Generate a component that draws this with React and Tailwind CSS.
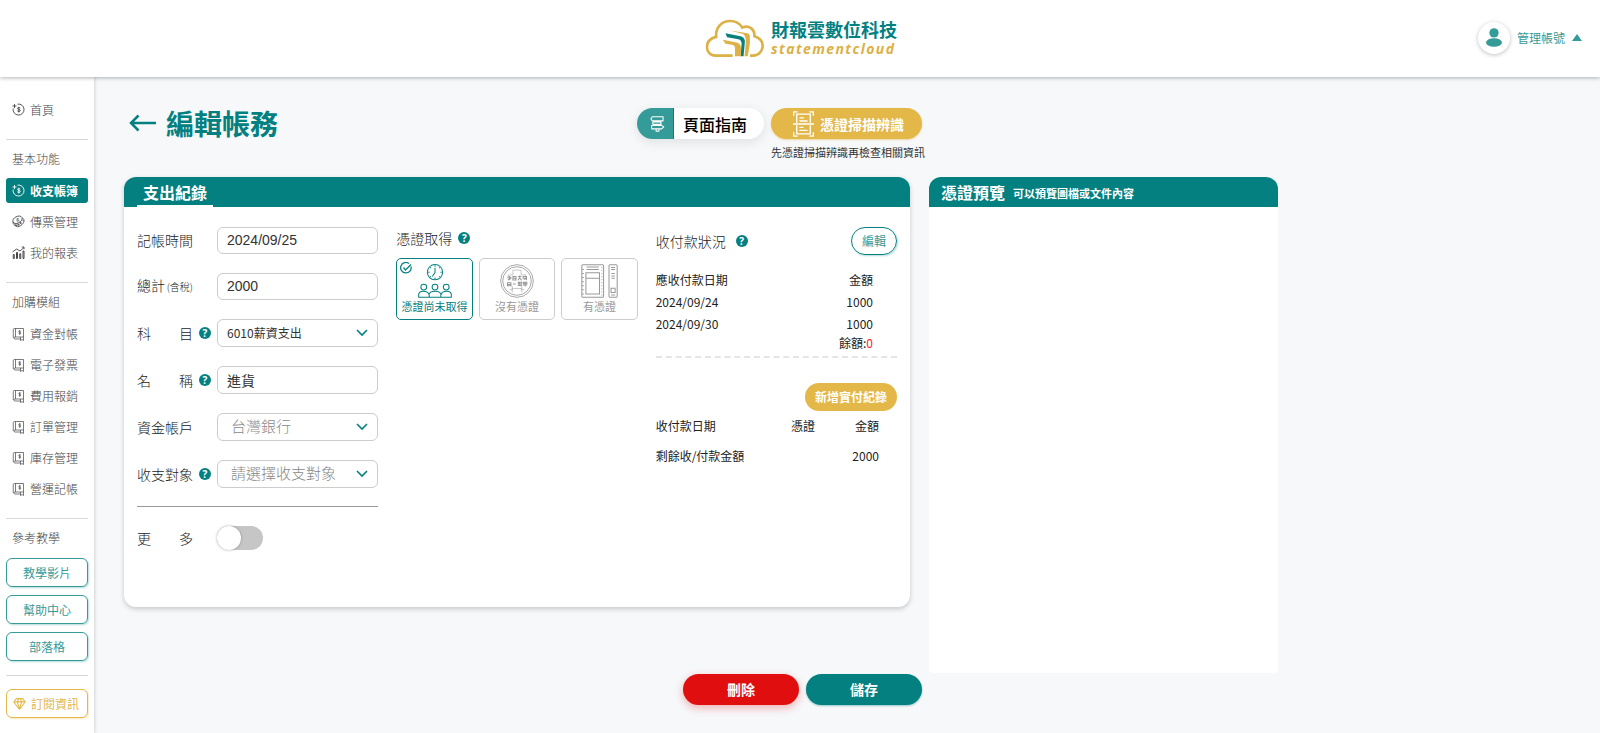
import React, { useState } from 'react';
import clsx from 'clsx';
import { Gem } from 'lucide-react';

const CoinIcon = () => (
    <svg viewBox="0 0 26 26" className="size-[13px] shrink-0" fill="none" stroke="currentColor" strokeWidth="1.800">
        <path d="M11 2.300A11 11 0 1 1 2.300 11" />
        <path d="M1 6h8M5 2v8" />
        <path d="M16.500 10.300c-.7-1.300-5.500-1.800-5.500.8s5.600 1.400 5.600 4-5 2.200-6 .4M13.700 7.500v11.500" strokeWidth="1.800" />
    </svg>
);

const VoucherIcon = () => (
    <svg viewBox="0 0 26 26" className="size-[13px] shrink-0" fill="none" stroke="currentColor" strokeWidth="1.600">
        <ellipse cx="11" cy="9.500" rx="10" ry="6.500" transform="rotate(-28 11 9.500)" />
        <path d="M2 14c0 3 1 5 3 6 5 2 10-1 14-5M5 20c2 3 5 4 9 3 6-2 10-7 10-12 0-2-1-4-3-5" />
        <path d="M6 16.500l4 6M11 16l3 6M16 13l3 6M20 9l4 4" strokeWidth="1.400" />
        <path d="M13.500 7.500c-1.200-1-4.500-.4-4 1.200s4 .6 4.100 2.200-3.400 1.600-4.400.6" />
    </svg>
);

const ChartIcon = () => (
    <svg viewBox="0 0 26 26" className="size-[13px] shrink-0" fill="none" stroke="currentColor" strokeWidth="2">
        <path d="M2.500 25v-8h2v8zM9 25V13h2v12zM15.500 25V15.500h2V25zM22 25V10h2v15z" />
        <path d="M1 12 9 6l7 4 8-7M19.500 2H24v4.500" strokeWidth="1.800" />
    </svg>
);

const LedgerIcon = () => (
    <svg viewBox="0 0 26 28" className="h-[14px] w-[13px] shrink-0" fill="none" stroke="currentColor" strokeWidth="1.400">
        <path d="M8 3h15v17H5a2.500 2.500 0 0 0 0 4h12M8 3H5a2.500 2.500 0 0 0-2.500 2.500V22M7 3v17" />
        <path d="M17 20v7l3-2 3 2v-7" />
        <path d="M17.300 8.500c-.6-1-3.800-1-3.800.8s4 1 4 2.900-3.600 1.600-4.300.4M15.500 6.500v9" />
    </svg>
);

const CloudLogo = () => (
    <svg viewBox="46 55 182 118" className="h-[39px] w-[60px]">
        <path
            d="M130 166H78c-16 0-26-12-26-26 0-16 11-27 28-31-3-27 16-48 42-48 16 0 29 7 37 20 20-9 38 4 37 26 16 5 25 15 25 29 0 16-12 29-30 30h-9"
            fill="none"
            stroke="#dcb146"
            strokeWidth="8"
        />
        <path d="M122 90l53 8q7 1 7 9v22l-6 39h-10l4-44q0-18-8-24z" fill="#dcb146" />
        <path d="M108 98l46 9q13 3 13 17l-4 44h-9l3-38q0-12-10-14l-34-6z" fill="#0a807c" />
        <path d="M100 118l42 8q12 3 13 16v26h-18v-24q0-9-9-11l-20-3z" fill="#dcb146" />
    </svg>
);

const SignpostIcon = () => (
    <svg viewBox="0 0 42 46" className="h-4 w-[15px]" fill="none" stroke="currentColor" strokeWidth="3" strokeLinejoin="round">
        <path d="M6 2h31v12H6L2 8zM9 17h22v7H9q-4-3.500 0-7zM5 27h28l6 4.500-6 5.500H5q-3-5 0-10z" />
        <path d="M17 14v3M25 14v3M17 24v3M25 24v3M17 37v7h8v-7" />
    </svg>
);

const ScanIcon = () => (
    <svg viewBox="0 0 62 76" className="h-[26px] w-[21px]" fill="none" stroke="currentColor" strokeWidth="4">
        <path d="M2 14V2h12M48 2h12v12M2 62v12h12M48 74h12V62M0 38h62" />
        <path d="M11 34V9h40v25M11 42v25h40V42M19 20h14M19 29h24M19 48h12M19 57h24" />
    </svg>
);

const WaitingIcon = () => (
    <svg viewBox="0 0 100 100" className="size-[34px]" fill="none" stroke="currentColor" strokeWidth="3">
        <circle cx="50" cy="24" r="22.500" />
        <path d="M50 11v14l-8 12M50 4v4M50 40v4M30 24h4M66 24h4M36 10l2 2M64 10l-2 2M36 38l2-2M64 38l-2-2" />
        <circle cx="17" cy="68" r="8.500" />
        <circle cx="50" cy="68" r="8.500" />
        <circle cx="83" cy="68" r="8.500" />
        <path d="M2 98V90q0-10 14-10t16 10q2-10 18-10t18 10q2-10 16-10t14 10v8zM33 90v8M67 90v8" />
    </svg>
);

const StampIcon = () => (
    <svg viewBox="0 0 100 100" className="size-[34px]" fill="none" stroke="currentColor" strokeWidth="2.500">
        <circle cx="50" cy="50" r="48" />
        <circle cx="50" cy="50" r="42" />
        <path d="M38 32V18h24v14h14v12M24 44V32h14M36 64v12h-8M64 64v12h8M36 84V72h28v12" opacity="0.6" />
        <path d="M22 39h12M28 35v12M23 47l10-5M38 37h9v10h-9zM38 42h9M53 37h10M58 34v6l-5 8M58 41l6 7M68 37h10v5H68zM70 46l8-4v6M22 55h10v9H22zM22 60h12M38 59h8M54 54h10v5H54zM52 63h13M58 54v10M69 54h10v4H69zM68 62h12M74 54v12" strokeWidth="3" />
    </svg>
);

const BinderIcon = () => (
    <svg viewBox="0 0 108 100" className="h-[34px] w-[37px]" fill="none" stroke="currentColor" strokeWidth="3">
        <rect x="2" y="2" width="64" height="96" rx="3" />
        <path d="M14 26h40v62H14zM14 42h40M16 9h36M16 16h36" />
        <path d="M3 16h5M3 28h5M3 40h5M3 52h5M3 64h5M3 76h5M3 88h5" />
        <path d="M61 8v86" strokeWidth="2" strokeDasharray="4 5" />
        <rect x="82" y="2" width="24" height="96" rx="3" />
        <path d="M88 10h12M88 16h12M89 28h10M89 35h10M89 42h10M88 71h12v13H88zM88 91h12" />
    </svg>
);

const Chevron = () => (
    <svg viewBox="0 0 12 8" className="pointer-events-none absolute right-[10px] h-2 w-3" fill="none" stroke="#058080" strokeWidth="1.600">
        <path d="M1 1l5 5 5-5" />
    </svg>
);

const Help = ({ label }) => (
    <button
        type="button"
        aria-label={label}
        className="flex size-3 shrink-0 items-center justify-center rounded-full bg-[#058080] font-['Open_Sans',sans-serif] text-[10px] leading-none font-bold text-white"
    >
        ?
    </button>
);

const menuGroups = [
    {
        title: '基本功能',
        items: [
            { name: '收支帳簿', Icon: CoinIcon, active: true },
            { name: '傳票管理', Icon: VoucherIcon },
            { name: '我的報表', Icon: ChartIcon },
        ],
    },
    {
        title: '加購模組',
        items: ['資金對帳', '電子發票', '費用報銷', '訂單管理', '庫存管理', '營運記帳'].map((name) => ({
            name,
            Icon: LedgerIcon,
        })),
    },
];

const MenuItem = ({ name, Icon, active }) => (
    <a
        href="#"
        className={clsx(
            'flex h-[25px] items-center gap-[5px] rounded-[3px] pl-[6px]',
            active ? 'bg-[#058080] font-bold text-white' : 'font-light text-[#444]'
        )}
    >
        <Icon />
        {name}
    </a>
);

const Divider = () => <hr className="mt-[17px] mb-[7px] border-[#d9d9d9]" />;

const Sidebar = () => (
    <nav className="w-[94px] shrink-0 bg-white px-[6px] pt-5 pb-[15px] text-xs shadow-[1px_0_3px_rgba(0,0,0,0.15)]">
        <MenuItem name="首頁" Icon={CoinIcon} />
        {menuGroups.map((group) => (
            <div key={group.title}>
                <Divider />
                <h2 className="mb-[7px] pl-[6px] leading-6 font-light text-[#444]">{group.title}</h2>
                <div className="flex flex-col gap-[6px]">
                    {group.items.map((item) => (
                        <MenuItem key={item.name} {...item} />
                    ))}
                </div>
            </div>
        ))}
        <Divider />
        <h2 className="mb-2 pl-[6px] leading-6 font-light text-[#444]">參考教學</h2>
        <div className="flex flex-col gap-2">
            {['教學影片', '幫助中心', '部落格'].map((name) => (
                <a
                    key={name}
                    href="#"
                    className="flex h-[29px] items-center justify-center rounded-md border border-[#359b98] text-[#359b98] shadow-[1px_1px_2px_rgba(5,128,128,0.3)]"
                >
                    {name}
                </a>
            ))}
        </div>
        <hr className="mt-[14px] mb-[13px] border-[#d9d9d9]" />
        <a
            href="#"
            className="flex h-[29px] items-center gap-[5px] rounded-md border border-[#e3b748] pl-[6px] text-[#e3b748] shadow-[1px_1px_2px_rgba(227,183,72,0.3)]"
        >
            <Gem size={13} strokeWidth={2} />
            訂閱資訊
        </a>
    </nav>
);

const Header = () => (
    <header className="relative z-10 grid h-[77px] grid-cols-[1fr_auto_1fr] items-center bg-white px-[18px] shadow-[0_1px_4px_rgba(0,0,0,0.3)]">
        <a href="#" className="col-start-2 flex items-center gap-[6px] pl-[2px]">
            <CloudLogo />
            <div className="pb-1">
                <p className="text-lg leading-6 font-bold text-[#058080]">財報雲數位科技</p>
                <p className="font-['Open_Sans',sans-serif] text-sm leading-4 font-bold tracking-widest text-[#dcb146] italic">
                    statementcloud
                </p>
            </div>
        </a>
        <button type="button" className="flex items-center gap-[7px] justify-self-end pb-[2px] text-xs text-[#359b98]">
            <span className="flex size-8 items-center justify-center rounded-full bg-white shadow-[0_1px_4px_rgba(0,0,0,0.25)]">
                <svg viewBox="0 0 48 56" className="h-[19px] w-4" fill="currentColor">
                    <circle cx="24" cy="14" r="14" />
                    <ellipse cx="24" cy="43" rx="24" ry="13" />
                </svg>
            </span>
            管理帳號
            <svg viewBox="0 0 10 7" className="h-[7px] w-[10px]" fill="currentColor">
                <path d="M5 0l5 7H0z" />
            </svg>
        </button>
    </header>
);

const fieldBox = 'w-full rounded-md border border-[#ccc] bg-white';

const FormRow = ({ id, label, help, children }) => (
    <div className="flex items-center">
        <div className="flex w-20 shrink-0 items-center justify-between pr-[6px] pb-px">
            <label htmlFor={id} className="flex w-14 items-baseline justify-between text-sm leading-5 font-light whitespace-nowrap text-[#222]">
                {label}
            </label>
            {help && <Help label="說明" />}
        </div>
        {children}
    </div>
);

const SelectField = ({ id, muted, children }) => (
    <div className="relative flex flex-1 items-center">
        <select
            id={id}
            className={clsx(
                fieldBox,
                'h-7 appearance-none',
                muted ? 'pb-px pl-[13px] text-[15px] font-light text-[#888]' : 'pl-[9px] text-xs text-[#333]'
            )}
        >
            <option>{children}</option>
        </select>
        <Chevron />
    </div>
);

const RecordForm = () => {
    const [more, setMore] = useState(false);

    return (
        <form>
            <div className="flex flex-col gap-[19px]">
                <FormRow id="date" label="記帳時間">
                    <input id="date" defaultValue="2024/09/25" className={clsx(fieldBox, "h-[27px] min-w-0 flex-1 px-[9px] pb-[2px] font-['Liberation_Sans',sans-serif] text-sm text-[#333]")} />
                </FormRow>
                <FormRow id="total" label={<>總計<span className="text-[10px]">(含稅)</span></>}>
                    <input id="total" defaultValue="2000" className={clsx(fieldBox, "h-[27px] min-w-0 flex-1 px-[9px] pb-[2px] font-['Liberation_Sans',sans-serif] text-sm text-[#333]")} />
                </FormRow>
                <FormRow id="subject" label={<><span>科</span><span>目</span></>} help>
                    <SelectField id="subject">6010薪資支出</SelectField>
                </FormRow>
                <FormRow id="name" label={<><span>名</span><span>稱</span></>} help>
                    <input id="name" defaultValue="進貨" className={clsx(fieldBox, 'h-7 min-w-0 flex-1 px-[9px] text-sm text-[#333]')} />
                </FormRow>
                <FormRow id="account" label="資金帳戶">
                    <SelectField id="account" muted>台灣銀行</SelectField>
                </FormRow>
                <FormRow id="target" label="收支對象" help>
                    <SelectField id="target" muted>請選擇收支對象</SelectField>
                </FormRow>
            </div>
            <hr className="mt-[18px] mb-[19px] border-[#999]" />
            <FormRow id="more" label={<><span>更</span><span>多</span></>}>
                <input
                    id="more"
                    type="checkbox"
                    checked={more}
                    onChange={() => setMore(!more)}
                    className="flex h-6 w-[46px] appearance-none rounded-full bg-[#c6c6c6] before:size-6 before:rounded-full before:bg-white before:shadow-[0_0_3px_rgba(0,0,0,0.3)] checked:justify-end checked:bg-[#058080]"
                />
            </FormRow>
        </form>
    );
};

const receiptTypes = [
    { name: '憑證尚未取得', Icon: WaitingIcon },
    { name: '沒有憑證', Icon: StampIcon },
    { name: '有憑證', Icon: BinderIcon },
];

const ReceiptPicker = () => {
    const [selected, setSelected] = useState('憑證尚未取得');

    return (
        <div>
            <div className="flex h-[22px] items-center gap-[6px] text-sm font-light text-[#222]">
                憑證取得
                <Help label="憑證取得說明" />
            </div>
            <div className="mt-[9px] grid grid-cols-3 gap-[6px]">
                {receiptTypes.map(({ name, Icon }) => (
                    <button
                        key={name}
                        type="button"
                        onClick={() => setSelected(name)}
                        className={clsx(
                            'relative flex h-[62px] flex-col items-center rounded-[5px] border pt-[5px] text-[11px] leading-4 whitespace-nowrap',
                            selected === name ? 'border-[#058080] text-[#058080]' : 'border-[#ccc] text-[#999]'
                        )}
                    >
                        {selected === name && (
                            <svg viewBox="0 0 24 24" className="absolute top-[3px] left-[3px] size-3" fill="none" stroke="currentColor" strokeWidth="2.500">
                                <path d="M22 9a10.500 10.500 0 1 1-4-6" />
                                <path d="M7 11l4 5L22 5" />
                            </svg>
                        )}
                        <Icon />
                        {name}
                    </button>
                ))}
            </div>
        </div>
    );
};

const PaymentStatus = () => (
    <div className="text-xs text-[#222]">
        <div className="flex h-7 items-center justify-between">
            <h3 className="flex items-center gap-[10px] text-sm font-light text-[#222]">
                收付款狀況
                <Help label="收付款狀況說明" />
            </h3>
            <button type="button" className="h-7 rounded-full border border-[#058080] px-[10px] text-[#359b98] shadow-[1px_1px_2px_rgba(5,128,128,0.3)]">
                編輯
            </button>
        </div>
        <table className="mt-[14px] w-full leading-[22px]">
            <thead>
                <tr>
                    <th className="p-0 text-left font-normal">應收付款日期</th>
                    <th className="p-0 pr-6 text-right font-normal">金額</th>
                </tr>
            </thead>
            <tbody>
                <tr>
                    <td className="p-0">2024/09/24</td>
                    <td className="p-0 pr-6 text-right">1000</td>
                </tr>
                <tr>
                    <td className="p-0">2024/09/30</td>
                    <td className="p-0 pr-6 text-right">1000</td>
                </tr>
            </tbody>
        </table>
        <p className="pr-6 text-right leading-4">
            餘額:<span className="text-[#f22]">0</span>
        </p>
        <hr className="mt-[5px] border-t-2 border-dashed border-[#e5e5e5]" />
        <div className="mt-[25px] flex justify-end">
            <button type="button" className="h-7 rounded-full bg-[#e3b748] px-[10px] font-bold text-white">
                新增實付紀錄
            </button>
        </div>
        <table className="w-full leading-[30px]">
            <thead>
                <tr>
                    <th className="p-0 text-left font-normal">收付款日期</th>
                    <th className="p-0 text-right font-normal">憑證</th>
                    <th className="w-[82px] p-0 pr-[18px] text-right font-normal">金額</th>
                </tr>
            </thead>
            <tbody>
                <tr>
                    <td className="p-0" colSpan={2}>剩餘收/付款金額</td>
                    <td className="p-0 pr-[18px] text-right">2000</td>
                </tr>
            </tbody>
        </table>
    </div>
);

const TitleBar = () => (
    <div className="flex h-[69px] items-start justify-between">
        <div className="flex items-center gap-[10px] pt-px pl-[5px] text-[#058080]">
            <a href="#" aria-label="返回">
                <svg viewBox="0 0 27 18" className="h-[18px] w-[27px]" fill="none" stroke="currentColor" strokeWidth="2.500">
                    <path d="M9.500 1.500L2 9l7.500 7.500M2 9h25" />
                </svg>
            </a>
            <h1 className="text-[28px] leading-7 font-bold">編輯帳務</h1>
        </div>
        <div className="flex gap-[7px]">
            <button type="button" className="flex h-[31px] w-[127px] items-center overflow-hidden rounded-full bg-white text-base font-medium text-black shadow-[0_3px_12px_rgba(0,0,0,0.1)]">
                <span className="flex h-full w-[37px] items-center justify-center border-r border-[#058080] bg-[#359b98] pl-1 text-white">
                    <SignpostIcon />
                </span>
                <span className="pl-[9px]">頁面指南</span>
            </button>
            <div className="w-[151px]">
                <button type="button" className="flex h-[31px] w-full items-center justify-center gap-[6px] rounded-full bg-[#e3b748] pl-1 text-sm font-bold text-white shadow-[0_1px_2px_rgba(227,183,72,0.5)]">
                    <ScanIcon />
                    憑證掃描辨識
                </button>
                <p className="mt-[5px] text-[11px] leading-4 whitespace-nowrap text-[#333]">先憑證掃描辨識再檢查相關資訊</p>
            </div>
        </div>
    </div>
);

export default function App() {
    return (
        <div className="flex min-h-screen flex-col bg-[#f6f8fa] font-['Noto_Sans_CJK_TC',sans-serif]">
            <Header />
            <div className="flex flex-1">
                <Sidebar />
                <main className="grid w-full max-w-[1184px] grid-cols-[1fr_349px] content-start gap-x-[7px] pt-[31px] pl-[30px]">
                    <TitleBar />
                    <div className="col-start-1">
                        <section className="mr-3 overflow-hidden rounded-xl bg-white shadow-[0_2px_5px_rgba(0,0,0,0.2)]">
                            <div className="flex h-[30px] items-end bg-[#058080] px-[13px]">
                                <h2 className="border-b-2 border-white px-[6px] pb-px text-base leading-6 font-bold text-white">支出紀錄</h2>
                            </div>
                            <div className="grid grid-cols-3 gap-[18px] px-[13px] pt-5 pb-[57px]">
                                <RecordForm />
                                <ReceiptPicker />
                                <PaymentStatus />
                            </div>
                        </section>
                        <div className="mt-[67px] mb-7 flex justify-end gap-[7px] text-sm font-bold text-white">
                            <button type="button" className="h-[31px] w-[116px] rounded-full bg-[#e00e0e] pb-[2px] shadow-[0_3px_8px_rgba(224,14,14,0.3)]">
                                刪除
                            </button>
                            <button type="button" className="h-[31px] w-[116px] rounded-full bg-[#058080] pb-[2px] shadow-[0_1px_2px_rgba(5,128,128,0.4)]">
                                儲存
                            </button>
                        </div>
                    </div>
                    <section className="h-[496px] overflow-hidden rounded-t-xl rounded-b bg-white">
                        <div className="flex h-[30px] items-center gap-2 bg-[#058080] px-3 font-bold text-white">
                            <h2 className="text-base">憑證預覽</h2>
                            <p className="pt-[2px] text-[11px]">可以預覽圖檔或文件內容</p>
                        </div>
                    </section>
                </main>
            </div>
        </div>
    );
}
